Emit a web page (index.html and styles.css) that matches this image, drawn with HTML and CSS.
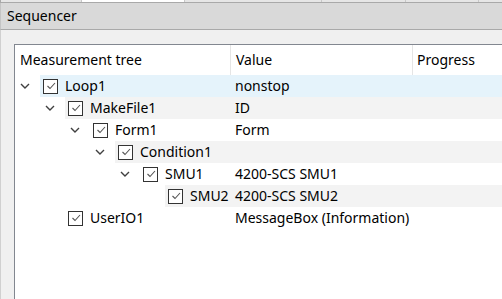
FILE: index.html
```html
<!DOCTYPE html>
<html lang="en">

<head>
    <meta charset="UTF-8">
    <title>Sequencer</title>
    <link rel="stylesheet" href="styles.css">
</head>

<body>
    <div class="tabs">
        <div class="tab" style="width: 80px"></div>
        <div class="tab active" style="width: 102px"></div>
        <div class="tab" style="width: 136px"></div>
        <div class="tab" style="width: 83px"></div>
        <div class="tab" style="width: 72px"></div>
        <div class="tab"></div>
    </div>
    <div class="title">Sequencer</div>
    <div class="panel">
        <div class="tree">
            <div class="header">
                <div class="col col-name">Measurement tree</div>
                <div class="col col-value">Value</div>
                <div class="col col-progress">Progress</div>
            </div>

            <div class="row selected">
                <div class="name-cell">
                    <span class="toggle"><svg width="10" height="6" viewBox="0 0 10 6"><polyline points="1,1 5,5 9,1" /></svg></span>
                    <div class="label"><span class="check"><svg width="12" height="12" viewBox="0 0 12 12"><polyline points="2.5,6 5,8.5 10,3" /></svg></span>Loop1</div>
                </div>
                <div class="value">nonstop</div>
            </div>

            <div class="row alt">
                <div class="name-cell">
                    <span class="indent" style="width: 25px"></span>
                    <span class="toggle"><svg width="10" height="6" viewBox="0 0 10 6"><polyline points="1,1 5,5 9,1" /></svg></span>
                    <div class="label"><span class="check"><svg width="12" height="12" viewBox="0 0 12 12"><polyline points="2.5,6 5,8.5 10,3" /></svg></span>MakeFile1</div>
                </div>
                <div class="value">ID</div>
            </div>

            <div class="row">
                <div class="name-cell">
                    <span class="indent" style="width: 50px"></span>
                    <span class="toggle"><svg width="10" height="6" viewBox="0 0 10 6"><polyline points="1,1 5,5 9,1" /></svg></span>
                    <div class="label"><span class="check"><svg width="12" height="12" viewBox="0 0 12 12"><polyline points="2.5,6 5,8.5 10,3" /></svg></span>Form1</div>
                </div>
                <div class="value">Form</div>
            </div>

            <div class="row alt">
                <div class="name-cell">
                    <span class="indent" style="width: 75px"></span>
                    <span class="toggle"><svg width="10" height="6" viewBox="0 0 10 6"><polyline points="1,1 5,5 9,1" /></svg></span>
                    <div class="label"><span class="check"><svg width="12" height="12" viewBox="0 0 12 12"><polyline points="2.5,6 5,8.5 10,3" /></svg></span>Condition1</div>
                </div>
                <div class="value"></div>
            </div>

            <div class="row">
                <div class="name-cell">
                    <span class="indent" style="width: 100px"></span>
                    <span class="toggle"><svg width="10" height="6" viewBox="0 0 10 6"><polyline points="1,1 5,5 9,1" /></svg></span>
                    <div class="label"><span class="check"><svg width="12" height="12" viewBox="0 0 12 12"><polyline points="2.5,6 5,8.5 10,3" /></svg></span>SMU1</div>
                </div>
                <div class="value">4200-SCS SMU1</div>
            </div>

            <div class="row alt">
                <div class="name-cell">
                    <span class="indent" style="width: 125px"></span>
                    <span class="toggle"></span>
                    <div class="label"><span class="check"><svg width="12" height="12" viewBox="0 0 12 12"><polyline points="2.5,6 5,8.5 10,3" /></svg></span>SMU2</div>
                </div>
                <div class="value">4200-SCS SMU2</div>
            </div>

            <div class="row">
                <div class="name-cell">
                    <span class="indent" style="width: 25px"></span>
                    <span class="toggle"></span>
                    <div class="label"><span class="check"><svg width="12" height="12" viewBox="0 0 12 12"><polyline points="2.5,6 5,8.5 10,3" /></svg></span>UserIO1</div>
                </div>
                <div class="value">MessageBox (Information)</div>
            </div>
        </div>
    </div>
</body>

</html>
```

FILE: styles.css
```css
body {
    margin: 0;
    width: 502px;
    height: 299px;
    overflow: hidden;
    background-color: #f0f0f0;
    font-family: "Segoe UI", "Noto Sans", "Open Sans", sans-serif;
    font-size: 14px;
    color: #000;
    display: flex;
    flex-direction: column;
}

.tabs {
    display: flex;
    height: 2px;
    border-bottom: 1px solid #a9a9a9;
    border-left: 1px solid #a9a9a9;
}

.tab {
    background-color: #e6e6e6;
    border-right: 1px solid #c8c8c8;
}

.tab:last-child {
    flex: 1;
    border-right: none;
}

.tab.active {
    background-color: #ffffff;
}

.title {
    height: 26px;
    line-height: 26px;
    padding-left: 6px;
    background-color: #d9d9d9;
    border-bottom: 1px solid #a9a9a9;
    border-left: 1px solid #c4c4c4;
}

.panel {
    flex: 1;
    padding: 14px 0 0 13px;
    border-left: 1px solid #d0d0d0;
}

.tree {
    height: 100%;
    background-color: #ffffff;
    border-top: 1px solid #828790;
    border-left: 1px solid #828790;
}

.header {
    display: flex;
    height: 30px;
}

.col {
    line-height: 30px;
    padding-left: 5px;
    border-right: 1px solid #e5e5e5;
}

.col-name {
    width: 210px;
}

.col-value {
    width: 176px;
    padding-left: 5px;
}

.col-progress {
    flex: 1;
    padding-left: 4px;
    border-right: none;
}

.row {
    display: flex;
    height: 22px;
    line-height: 22px;
    white-space: nowrap;
}

.name-cell {
    display: flex;
    width: 216px;
    flex-shrink: 0;
}

.indent {
    flex-shrink: 0;
}

.toggle {
    width: 25px;
    flex-shrink: 0;
    display: flex;
    align-items: center;
    padding-left: 5px;
    box-sizing: border-box;
}

.toggle svg {
    fill: none;
    stroke: #404040;
    stroke-width: 1.4;
}

.label {
    flex: 1;
    display: flex;
    align-items: center;
    padding-left: 3px;
    overflow: visible;
}

.check {
    width: 13px;
    height: 13px;
    border: 1px solid #333333;
    background-color: #ffffff;
    margin-right: 7px;
    display: flex;
    align-items: center;
    justify-content: center;
    flex-shrink: 0;
}

.check svg {
    fill: none;
    stroke: #555555;
    stroke-width: 1.1;
}

.value {
    flex: 1;
    padding-left: 4px;
}

.row.alt .label,
.row.alt .value {
    background-color: #f3f3f3;
}

.row.selected .label,
.row.selected .value {
    background-color: #e5f3fb;
}
```
